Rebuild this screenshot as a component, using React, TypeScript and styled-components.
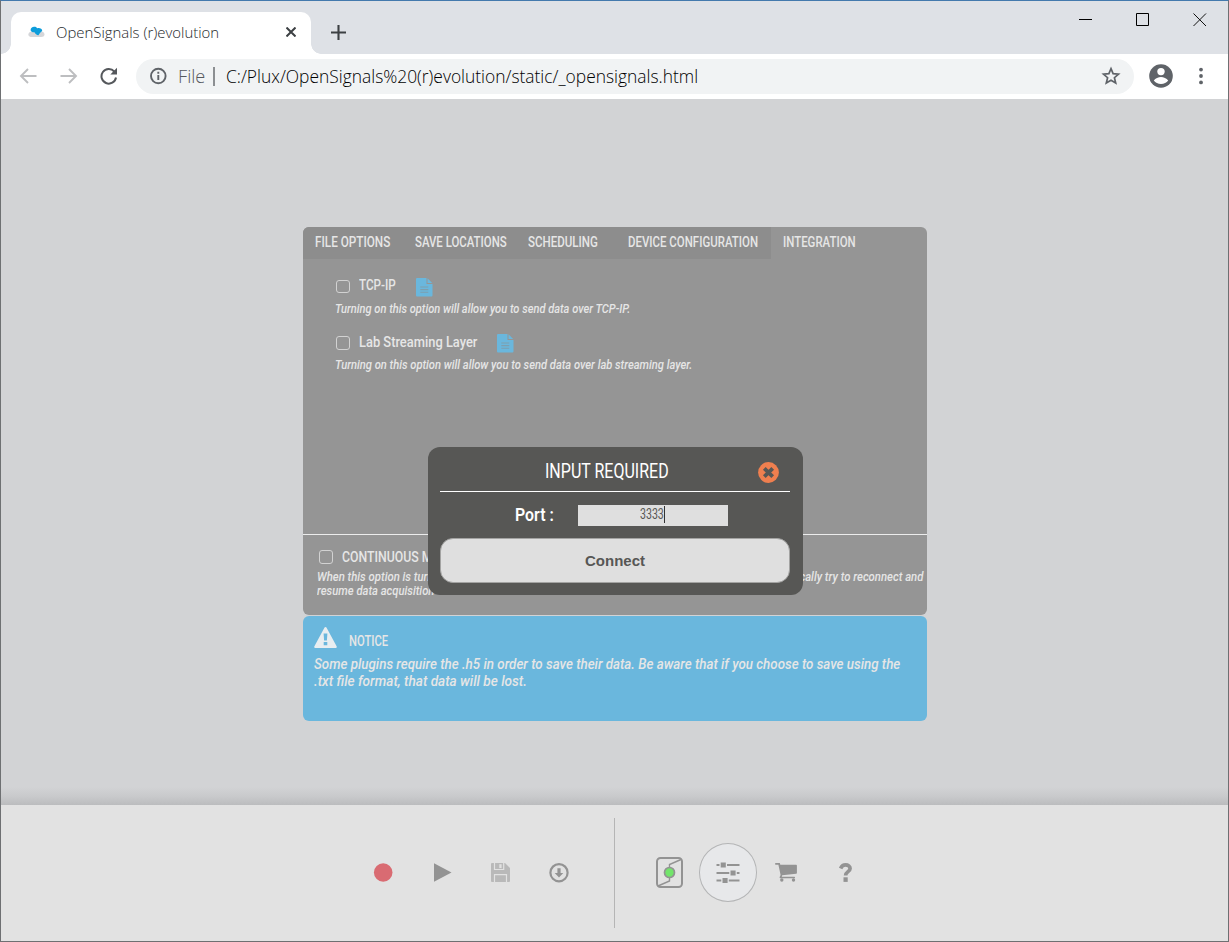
import React, { useLayoutEffect, useRef, useState } from "react";
import styled, { createGlobalStyle } from "styled-components";

const GlobalStyle = createGlobalStyle`
  *, *::before, *::after { box-sizing: border-box; }
  html, body { margin: 0; padding: 0; overflow: hidden; }
  body { font-family: Roboto, "Liberation Sans", sans-serif; }
  svg { display: block; flex: none; }
`;

/* ---------- text squeezed to a given width ---------- */

type TextProps = {
  $size: number;
  $line: number;
  $weight?: number;
  $color?: string;
  $italic?: boolean;
  $ui?: boolean;
};

const TextBox = styled.span<{ $w: number; $line: number }>`
  display: block;
  flex: none;
  width: ${(p) => p.$w}px;
  height: ${(p) => p.$line}px;
`;

const TextInk = styled.span<TextProps>`
  display: inline-block;
  vertical-align: top;
  white-space: nowrap;
  transform-origin: 0 50%;
  font-family: ${(p) => (p.$ui ? '"Open Sans", "Noto Sans"' : 'Roboto, "Liberation Sans"')}, sans-serif;
  font-size: ${(p) => p.$size}px;
  line-height: ${(p) => p.$line}px;
  font-weight: ${(p) => p.$weight ?? 500};
  font-style: ${(p) => (p.$italic ? "italic" : "normal")};
  color: ${(p) => p.$color ?? "#e6e6e6"};
`;

function Narrow({
  width,
  size,
  line = 20,
  weight,
  color,
  italic,
  ui,
  children,
}: {
  width: number;
  size: number;
  line?: number;
  weight?: number;
  color?: string;
  italic?: boolean;
  ui?: boolean;
  children: React.ReactNode;
}) {
  const ref = useRef<HTMLSpanElement>(null);
  const [scale, setScale] = useState(1);
  useLayoutEffect(() => {
    if (ref.current && ref.current.offsetWidth) setScale(width / ref.current.offsetWidth);
  }, [width]);
  return (
    <TextBox $w={width} $line={line}>
      <TextInk
        ref={ref}
        $size={size}
        $line={line}
        $weight={weight}
        $color={color}
        $italic={italic}
        $ui={ui}
        style={{ transform: `scaleX(${scale})` }}
      >
        {children}
      </TextInk>
    </TextBox>
  );
}

/* ---------- browser window ---------- */

const Window = styled.div`
  width: 1229px;
  height: 942px;
  display: flex;
  flex-direction: column;
  border: 1px solid #6e7072;
  border-top-color: #4379ad;
  background: #d2d3d5;
  overflow: hidden;
`;

const TabStrip = styled.header`
  height: 53px;
  flex: none;
  display: flex;
  background: #dee1e6;
  padding: 11px 0 0 10px;
`;

const BrowserTab = styled.div`
  position: relative;
  width: 300px;
  height: 42px;
  display: flex;
  align-items: center;
  padding: 0 0 2px 17px;
  background: #fff;
  border-radius: 10px 10px 0 0;
  &::before,
  &::after {
    content: "";
    position: absolute;
    bottom: 0;
    width: 10px;
    height: 10px;
  }
  &::before {
    left: -10px;
    background: radial-gradient(circle at 0 0, transparent 9.5px, #fff 10px);
  }
  &::after {
    right: -10px;
    background: radial-gradient(circle at 100% 0, transparent 9.5px, #fff 10px);
  }
`;

const TabTitle = styled.div`
  margin-left: 11px;
  width: 230px;
`;

const NewTab = styled.div`
  margin: 13px 0 0 20px;
`;

const WindowControls = styled.div`
  margin: 1px 21px 0 auto;
  display: flex;
  gap: 43px;
`;

const Toolbar = styled.nav`
  height: 45px;
  flex: none;
  display: flex;
  align-items: center;
  padding-left: 17px;
  background: #fff;
`;

const NavButtons = styled.div`
  width: 118px;
  display: flex;
  gap: 20px;
  padding-bottom: 1px;
`;

const AddressBar = styled.div`
  width: 998px;
  height: 35px;
  display: flex;
  align-items: center;
  padding: 0 13px 1px;
  border-radius: 18px;
  background: #f1f3f4;
`;

const AddressRule = styled.div`
  width: 1.5px;
  height: 19px;
  margin: 0 11px 0 8px;
  background: #8c8f92;
`;

const Spacer = styled.div<{ $w: number }>`
  width: ${(p) => p.$w}px;
  flex: none;
`;

const Push = styled.div`
  flex: 1;
`;

/* ---------- settings page ---------- */

const Page = styled.main`
  height: 706px;
  flex: none;
  padding: 128px 0 0 302px;
  background: linear-gradient(#d2d3d5 0, #d2d3d5 688px, #c9cacc 697px, #bbbcbe 706px);
`;

const Stack = styled.div`
  position: relative;
  width: 624px;
  display: flex;
  flex-direction: column;
  gap: 1px;
`;

const Panel = styled.section`
  height: 388px;
  border-radius: 6px;
  background: #959595;
  overflow: hidden;
`;

const PanelTabs = styled.div`
  height: 32px;
  display: flex;
`;

const IdleTabs = styled.div`
  width: 468px;
  display: flex;
  padding: 5px 0 0 12px;
  background: #8d8d8d;
`;

const ActiveTab = styled.div`
  padding: 5px 0 0 12px;
`;

const Options = styled.div`
  height: 275px;
  padding: 16px 0 0 32px;
`;

const Option = styled.div`
  height: 56.5px;
`;

const OptionRow = styled.div`
  display: flex;
  height: 24px;
`;

const Check = styled.span`
  width: 14px;
  height: 13.5px;
  flex: none;
  margin: 4.5px 9px 0 1px;
  border: 1.5px solid #d2d2d2;
  border-radius: 3px;
`;

const DocIcon = styled.svg`
  margin: 2.5px 0 0 20px;
`;

const Continuous = styled.div`
  height: 81px;
  padding: 12px 0 0 14px;
  border-top: 1px solid #ececec;
`;

const ContinuousRow = styled.div`
  display: flex;
  height: 23px;
  ${Check} {
    margin: 3px 9px 0 2px;
  }
`;

const Notice = styled.section`
  height: 105px;
  padding: 10px 11px;
  border-radius: 6px;
  background: #6ab7dd;
`;

const NoticeHead = styled.div`
  display: flex;
  gap: 12px;
  height: 30px;
  padding-top: 1px;
`;

const NoticeTitle = styled.div`
  padding-top: 4px;
`;

/* ---------- dialog ---------- */

const Dialog = styled.div`
  position: absolute;
  left: 125px;
  top: 220px;
  width: 375px;
  height: 148px;
  padding: 0 13px 0 12px;
  border-radius: 12px;
  background: #575755;
`;

const DialogHead = styled.div`
  height: 45px;
  display: flex;
  padding: 13px 0 0 105px;
  border-bottom: 1px solid #fff;
`;

const CloseIcon = styled.svg`
  margin: 2px 0 0 89px;
`;

const Field = styled.label`
  height: 46px;
  display: flex;
  padding: 13px 0 0 75px;
`;

const PortInput = styled.div`
  width: 150px;
  height: 21px;
  display: flex;
  margin-left: 24px;
  padding-left: 62px;
  background: #dfdfdf;
`;

const Caret = styled.span`
  width: 1px;
  height: 17px;
  margin-top: 1px;
  background: #333;
`;

const ConnectButton = styled.button`
  width: 350px;
  height: 45px;
  display: block;
  padding: 0;
  border: 1px solid #a3a3a2;
  border-radius: 13px;
  background: #dfdfdf;
  color: #575755;
  font: bold 15px "Liberation Sans", Arial, sans-serif;
`;

/* ---------- bottom bar ---------- */

const Dock = styled.footer`
  height: 136px;
  flex: none;
  display: flex;
  align-items: center;
  padding-left: 353px;
  background: #e2e2e2;
`;

const DockGroup = styled.div`
  display: flex;
  padding-bottom: 1px;
`;

const DockSlot = styled.div<{ $active?: boolean }>`
  width: 58.6px;
  height: 59px;
  display: flex;
  align-items: center;
  justify-content: center;
  border-radius: 50%;
  ${(p) => p.$active && "background: #e7e8ea; border: 1px solid #b4b5b6;"}
`;

const DockRule = styled.div`
  width: 1px;
  height: 110px;
  margin: 0 25px 0 25.6px;
  background: #b5b5b5;
`;

const GREY = "#939393";

const FileText = () => (
  <DocIcon width="17" height="19" viewBox="0 0 17 19" fill="#6ab7dd">
    <path d="M1 0h9.500v6H16.500v11.500a1 1 0 0 1-1 1H1a1 1 0 0 1-1-1V1a1 1 0 0 1 1-1z" />
    <path d="M11.500 0.300 16.200 5h-4.700z" />
    <path d="M4.300 9h8M4.300 11.600h8M4.300 14.200h8" stroke="#7e9fae" strokeWidth="1.100" />
  </DocIcon>
);

export default function App() {
  return (
    <>
      <GlobalStyle />
      <Window>
        <TabStrip>
          <BrowserTab>
            <svg width="17" height="12" viewBox="0 0 17 12">
              <path d="M3.500 5.500C1 6 0 7.500 .4 9c.4 1.400 1.800 2 3.300 2h9.500c1.800 0 3.300-.8 3.300-2.500 0-1.600-1.200-2.700-3-3z" fill="#d5d6d9" />
              <path d="M2.600 4.200C2.500 1.500 5 .2 7.200.8 8.500 1 8.700 2 9.500 2.200c2-.4 4.700.2 4.700 2.600-1 1.500-2.500 2-3.700 4.400C8.800 9.400 7.500 8 6.500 6.300 4.500 6.500 2.900 5.600 2.600 4.200z" fill="#0d9ddb" />
            </svg>
            <TabTitle>
              <Narrow ui width={163} size={15} weight={350} color="#26292c">OpenSignals (r)evolution</Narrow>
            </TabTitle>
            <svg width="10" height="10" viewBox="0 0 10 10" stroke="#3c4043" strokeWidth="2">
              <path d="M.5.5l9 9M9.500.5l-9 9" />
            </svg>
          </BrowserTab>
          <NewTab>
            <svg width="15" height="15" viewBox="0 0 15 15" stroke="#3c4043" strokeWidth="2.100">
              <path d="M7.500 0v15M0 7.500h15" />
            </svg>
          </NewTab>
          <WindowControls>
            <svg width="14" height="14" viewBox="0 0 14 14"><path d="M0 6.500h13" stroke="#000" /></svg>
            <svg width="14" height="14" viewBox="0 0 14 14"><path d="M.5.5h12v12H.5z" stroke="#000" fill="none" /></svg>
            <svg width="14" height="14" viewBox="0 0 14 14"><path d="M.5.5l12.500 12.500M13 .5L.5 13" stroke="#111" /></svg>
          </WindowControls>
        </TabStrip>

        <Toolbar>
          <NavButtons>
            <svg width="20" height="18" viewBox="0 0 20 18" fill="none" stroke="#bdbec0" strokeWidth="1.900">
              <path d="M18.500 9H3.500M10 2 3 9l7 7" />
            </svg>
            <svg width="20" height="18" viewBox="0 0 20 18" fill="none" stroke="#bdbec0" strokeWidth="1.900">
              <path d="M2.500 9h15M11 2l7 7-7 7" />
            </svg>
            <svg width="20" height="18" viewBox="0 0 20 18" fill="none" stroke="#55585c" strokeWidth="2">
              <path d="M16.300 4.500A7.300 7.300 0 1 0 18 10.500" />
              <path d="M19 .800V7.500H12.300z" fill="#55585c" stroke="none" />
            </svg>
          </NavButtons>
          <AddressBar>
            <svg width="18" height="18" viewBox="0 0 18 18" fill="none" stroke="#5f6368" strokeWidth="1.900">
              <circle cx="9.300" cy="9" r="7.300" />
              <path d="M9.300 8v5M9.300 4.800v1.900" />
            </svg>
            <Spacer $w={11} />
            <Narrow ui width={27} size={17.5} line={24} weight={350} color="#54585c">File</Narrow>
            <AddressRule />
            <Narrow ui width={472} size={17.5} line={24} weight={350} color="#000">
              C:/Plux/OpenSignals%20(r)evolution/static/_opensignals.html
            </Narrow>
            <Push />
            <svg width="20" height="20" viewBox="0 0 20 20" fill="none" stroke="#5f6368" strokeWidth="1.700">
              <path d="M10 2.700l2.100 5 5.400.5-4.100 3.500 1.300 5.300L10 14.200 5.300 17l1.300-5.300L2.500 8.200l5.400-.5z" />
            </svg>
          </AddressBar>
          <Spacer $w={15} />
          <svg width="24" height="25" viewBox="0 0 24 25">
            <circle cx="12" cy="12" r="11.800" fill="#5f6368" />
            <circle cx="12" cy="7.600" r="3.700" fill="#fff" />
            <path d="M4.800 16.500c1.500-2.300 4.700-3.500 7.200-3.500s5.700 1.200 7.200 3.500c-1.600 2.100-4.200 3.500-7.200 3.500s-5.600-1.400-7.200-3.500z" fill="#fff" />
          </svg>
          <Spacer $w={25} />
          <svg width="6" height="19" viewBox="0 0 6 19" fill="#5f6368">
            <circle cx="3" cy="2.600" r="1.900" />
            <circle cx="3" cy="9" r="1.900" />
            <circle cx="3" cy="15.400" r="1.900" />
          </svg>
        </Toolbar>

        <Page>
          <Stack>
            <Panel>
              <PanelTabs>
                <IdleTabs>
                  <Narrow width={75} size={15.5}>FILE OPTIONS</Narrow>
                  <Spacer $w={25} />
                  <Narrow width={92} size={15.5}>SAVE LOCATIONS</Narrow>
                  <Spacer $w={20.5} />
                  <Narrow width={70} size={15.5}>SCHEDULING</Narrow>
                  <Spacer $w={30.5} />
                  <Narrow width={130} size={15.5}>DEVICE CONFIGURATION</Narrow>
                </IdleTabs>
                <ActiveTab>
                  <Narrow width={73} size={15.5}>INTEGRATION</Narrow>
                </ActiveTab>
              </PanelTabs>
              <Options>
                <Option>
                  <OptionRow>
                    <Check />
                    <Narrow width={37} size={15.5}>TCP-IP</Narrow>
                    <FileText />
                  </OptionRow>
                  <Narrow italic width={295} size={12.5}>
                    Turning on this option will allow you to send data over TCP-IP.
                  </Narrow>
                </Option>
                <Option>
                  <OptionRow>
                    <Check />
                    <Narrow width={118} size={15.5}>Lab Streaming Layer</Narrow>
                    <FileText />
                  </OptionRow>
                  <Narrow italic width={357} size={12.5} line={18}>
                    Turning on this option will allow you to send data over lab streaming layer.
                  </Narrow>
                </Option>
              </Options>
              <Continuous>
                <ContinuousRow>
                  <Check />
                  <Narrow width={114} size={15.5}>CONTINUOUS MODE</Narrow>
                </ContinuousRow>
                <Narrow italic width={606} size={12.5} line={14}>
                  When this option is turned on and the connection to the device is lost, the application will automatically try to reconnect and
                </Narrow>
                <Narrow italic width={117} size={12.5} line={14}>resume data acquisition</Narrow>
              </Continuous>
            </Panel>

            <Notice>
              <NoticeHead>
                <svg width="23" height="21" viewBox="0 0 23 21">
                  <path d="M10.400.8a1.200 1.200 0 0 1 2.200 0l10 18.400a1.200 1.200 0 0 1-1.100 1.800H1.500A1.200 1.200 0 0 1 .4 19.200z" fill="#e8eef1" />
                  <path d="M9.600 6.500h3.800l-.5 7h-2.800zM9.700 15h3.600v3.200H9.700z" fill="#6ab7dd" />
                </svg>
                <NoticeTitle>
                  <Narrow width={39} size={15.5} weight={500}>NOTICE</Narrow>
                </NoticeTitle>
              </NoticeHead>
              <Narrow italic width={586} size={14.5} line={17}>
                Some plugins require the .h5 in order to save their data. Be aware that if you choose to save using the
              </Narrow>
              <Narrow italic width={213} size={14.5} line={17}>.txt file format, that data will be lost.</Narrow>
            </Notice>

            <Dialog>
              <DialogHead>
                <Narrow width={124} size={19.5} line={24} weight={400} color="#fff">INPUT REQUIRED</Narrow>
                <CloseIcon width="21" height="21" viewBox="0 0 21 21">
                  <circle cx="10.500" cy="10.500" r="10.400" fill="#ef7f4f" />
                  <path d="M6.300 6.300l8.400 8.400M14.700 6.300l-8.400 8.400" stroke="#575755" strokeWidth="3.800" />
                </CloseIcon>
              </DialogHead>
              <Field>
                <Narrow width={39} size={17.5} weight={600} color="#fff">Port :</Narrow>
                <PortInput>
                  <Narrow width={24} size={15} line={18} weight={400} color="#575755">3333</Narrow>
                  <Caret />
                </PortInput>
              </Field>
              <ConnectButton>Connect</ConnectButton>
            </Dialog>
          </Stack>
        </Page>

        <Dock>
          <DockGroup>
            <DockSlot>
              <svg width="20" height="20" viewBox="0 0 20 20"><circle cx="10.200" cy="9.500" r="9.300" fill="#d96b72" /></svg>
            </DockSlot>
            <DockSlot>
              <svg width="20" height="20" viewBox="0 0 20 20"><path d="M2 .300 19.500 9.500 2 18.800z" fill={GREY} /></svg>
            </DockSlot>
            <DockSlot>
              <svg width="19" height="19" viewBox="0 0 19 19">
                <path d="M1 0h13l5 5v13a1 1 0 0 1-1 1H1a1 1 0 0 1-1-1V1a1 1 0 0 1 1-1z" fill="#b9b9b9" />
                <path d="M3.500 0v6.500h9.200V0M3.500 19v-7.300h12V19" fill="none" stroke="#e2e2e2" strokeWidth="1.200" />
                <path d="M8.300 1.200h2.300v3.900H8.300z" fill="#e2e2e2" />
              </svg>
            </DockSlot>
            <DockSlot>
              <svg width="20" height="20" viewBox="0 0 20 20">
                <circle cx="10" cy="9.700" r="8.600" fill="none" stroke={GREY} strokeWidth="2.200" />
                <path d="M8.400 5.200h3.200v4.700h2.700L10 14.500l-4.300-4.600h2.700z" fill={GREY} />
              </svg>
            </DockSlot>
          </DockGroup>
          <DockRule />
          <DockGroup>
            <DockSlot>
              <svg width="27" height="31" viewBox="0 0 27 31" fill="none" stroke={GREY}>
                <rect x="1" y="1" width="25" height="29" rx="3.500" strokeWidth="2" />
                <path d="M25 2.500 13.500 7.500V11M13.500 20v4L2 29" strokeWidth="1.400" />
                <circle cx="13.500" cy="15.500" r="5" fill="#72e56b" strokeWidth="1.700" />
              </svg>
            </DockSlot>
            <DockSlot $active>
              <svg width="24" height="22" viewBox="0 0 24 22">
                <path d="M.5 3H23.500M.5 11H23.500M.5 18.500H23.500" stroke={GREY} strokeWidth="1.900" />
                <path d="M3.500 0h7.500v6H3.500zM13.300 8h7.500v6h-7.500zM5.300 15.500h7.500v6H5.300z" fill="#e7e8ea" />
                <path d="M4.700.4h5.100v5.200H4.700zM14.500 8.400h5.100v5.200h-5.100zM6.500 15.900h5.100v5.200H6.500z" fill={GREY} />
              </svg>
            </DockSlot>
            <DockSlot>
              <svg width="22" height="19" viewBox="0 0 22 19" fill={GREY}>
                <path d="M.8 0H4.800l.5 1.700H21.200a.7.700 0 0 1 .7.700v7.500a.8.800 0 0 1-.7.800L7.200 12.200l-.4 1.500H19.300a.7.700 0 0 1 0 1.500H5.400a.8.800 0 0 1-.7-1.100l.9-2L3.400 1.700H.8A.8.800 0 0 1 .8 0z" />
                <circle cx="6.800" cy="17" r="1.700" />
                <circle cx="18.500" cy="17" r="1.700" />
              </svg>
            </DockSlot>
            <DockSlot>
              <svg width="13" height="19" viewBox="0 0 13 19">
                <path d="M1.600 5.500C2.600 3.200 4.200 1.900 6.600 1.900c2.500 0 4.500 1.400 4.500 3.600 0 3.300-4.500 3-4.500 7" fill="none" stroke={GREY} strokeWidth="3.700" />
                <path d="M4.500 14.300h4.200V18.900H4.500z" fill={GREY} />
              </svg>
            </DockSlot>
          </DockGroup>
        </Dock>
      </Window>
    </>
  );
}
